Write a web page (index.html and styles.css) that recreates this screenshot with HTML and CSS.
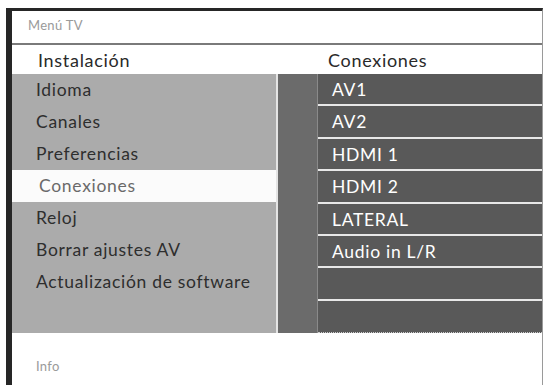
FILE: index.html
```html
<!DOCTYPE html>
<html>
<head>
<meta charset="UTF-8">
<title>Menú TV</title>
<link rel="stylesheet" href="styles.css">
</head>
<body>
<div class="screen">
  <div class="topbar">Menú TV</div>
  <div class="heads">
    <div class="head-left">Instalación</div>
    <div class="head-right">Conexiones</div>
  </div>
  <div class="panels">
    <ul class="menu">
      <li>Idioma</li>
      <li>Canales</li>
      <li>Preferencias</li>
      <li class="active">Conexiones</li>
      <li>Reloj</li>
      <li>Borrar ajustes AV</li>
      <li>Actualización de software</li>
    </ul>
    <div class="sep"></div>
    <div class="strip"></div>
    <ul class="sub">
      <li>AV1</li>
      <li>AV2</li>
      <li>HDMI 1</li>
      <li>HDMI 2</li>
      <li>LATERAL</li>
      <li>Audio in L/R</li>
      <li></li>
      <li></li>
    </ul>
  </div>
  <div class="info">Info</div>
</div>
</body>
</html>
```

FILE: styles.css
```css
* {
  margin: 0;
  padding: 0;
  box-sizing: border-box;
}

html, body {
  height: 100%;
}

body {
  background: #fff;
  font-family: Lato, "Open Sans", sans-serif;
  overflow: hidden;
}

.screen {
  margin: 8px 0 0 6px;
  width: 537px;
  height: 377px;
  border-left: 6px solid #262626;
  border-top: 3px solid #262626;
  border-right: 1px solid #9a9a9a;
  background: #fff;
}

.topbar {
  height: 34px;
  border-bottom: 2px solid #7a7a7a;
  padding: 6px 0 0 16px;
  font-size: 13px;
  letter-spacing: 0.3px;
  color: #9a9a9a;
}

.heads {
  display: grid;
  grid-template-columns: 305px 1fr;
  height: 29px;
  align-items: center;
  font-size: 18px;
  letter-spacing: 0.7px;
  color: #2a2a2a;
}

.head-left {
  padding-left: 26px;
}

.head-right {
  padding-left: 11px;
}

.panels {
  display: grid;
  grid-template-columns: 264px 2px 39px 1fr;
  height: 259px;
}

.menu {
  list-style: none;
  background: #ababab;
}

.menu li {
  height: 32px;
  line-height: 32px;
  padding-left: 24px;
  font-size: 17.5px;
  letter-spacing: 0.7px;
  color: #2e2e2e;
  white-space: nowrap;
}

.menu li.active {
  background: #fbfbfb;
  color: #6a6a6a;
  padding-left: 27px;
}

.sep {
  background: #e4e4e4;
}

.strip {
  background: #6b6b6b;
}

.sub {
  list-style: none;
  background: #595959;
  border-left: 1px solid #8a8a8a;
}

.sub li {
  height: 32.4px;
  line-height: 31px;
  padding-left: 14px;
  font-size: 17.5px;
  letter-spacing: 0.7px;
  color: #fff;
  border-bottom: 2px solid #e8e8e8;
}

.sub li:last-child {
  border-bottom: 1px dotted #cfcfcf;
}

.info {
  padding: 25px 0 0 24px;
  font-size: 13px;
  letter-spacing: 0.3px;
  color: #9a9a9a;
}
```
